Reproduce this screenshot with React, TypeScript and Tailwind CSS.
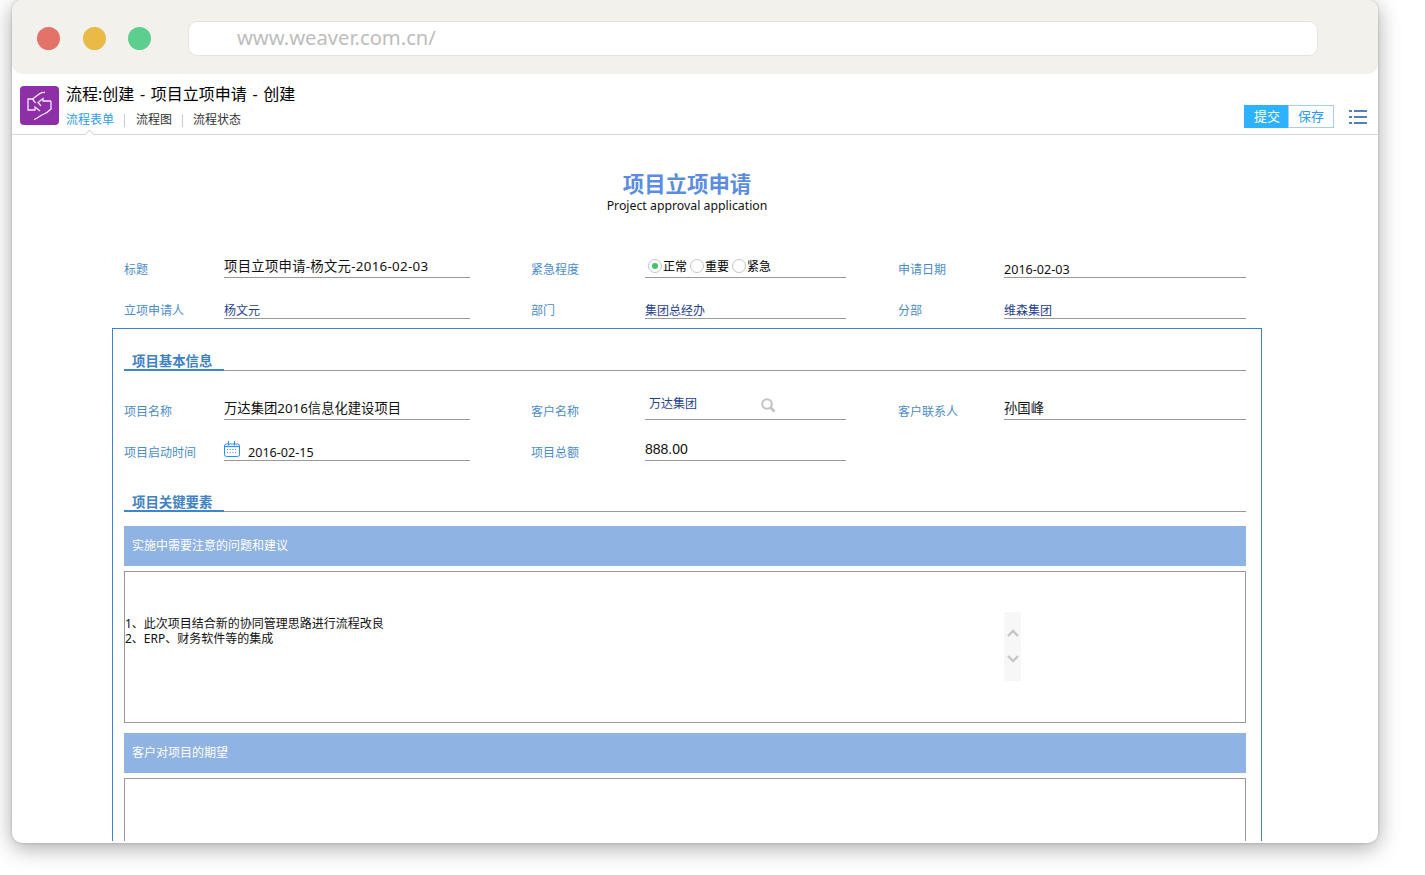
import type { ReactNode } from 'react'

const cjk = 'font-["Noto_Sans","Noto_Sans_CJK_SC",sans-serif]'

function Label({ children, className = '' }: { children: ReactNode; className?: string }) {
  return <div className={`self-end text-[12px] leading-4 text-[#4a8ccb] ${className}`}>{children}</div>
}

function Value({ children, className = '' }: { children: ReactNode; className?: string }) {
  return <div className={`relative h-[31px] border-b border-[#999] ${className}`}>{children}</div>
}

function Row({ children }: { children: ReactNode }) {
  return (
    <div className="grid grid-cols-[100px_246px_60px_115px_201px_52px_106px_242px] mb-[10px]">
      {children}
    </div>
  )
}

function Gap() {
  return <div />
}

function Radio({ on, label }: { on?: boolean; label: string }) {
  return (
    <span className="flex items-center">
      <span className="flex h-[14px] w-[14px] items-center justify-center rounded-full border border-[#c4c4c4] bg-white">
        {on && <span className="h-[6px] w-[6px] rounded-full bg-[#3cc46a]" />}
      </span>
      <span className="ml-px w-[27px] translate-y-px text-[12px] leading-4 text-black">{label}</span>
    </span>
  )
}

function SectionTitle({ title }: { title: string }) {
  return (
    <div className="relative h-[24px] border-b border-[#999]">
      <div className="h-[24px] w-[100px] border-b-2 border-[#3e86cc] pl-2 pt-[3px] text-[13.4px] font-bold leading-[22px] text-[#3e82c4]">
        {title}
      </div>
    </div>
  )
}

function Bar({ title }: { title: string }) {
  return (
    <div className="flex h-10 items-center bg-[#8fb3e3] pl-2 text-[12px] text-white">{title}</div>
  )
}

function Logo() {
  return (
    <div className="h-[39px] w-[39px] shrink-0 rounded-[4px] bg-[#8f2fa8]">
      <svg width="39" height="39" viewBox="0 0 39 39" fill="none" stroke="#f6ebf8" strokeWidth="1.3" strokeLinejoin="miter">
        <path d="M25 6.5 C21 6 19 8 12.5 13 L8 13 V24 H15 V21 L20 25" />
        <path d="M12.5 13 L15.5 17" />
        <path d="M31 15 H23 V12.5 L18 16.5 L21 20" />
        <path d="M31 15 V23 C28 26 26 27.5 23 28.5 C20 29.5 18 32 14 33.5" />
      </svg>
    </div>
  )
}

function Calendar() {
  return (
    <svg width="16" height="16" viewBox="0 0 16 16" fill="none" stroke="#2a8ff0" className="absolute left-0 top-[11px]">
      <rect x="0.5" y="3" width="15" height="12.5" rx="2" strokeWidth="1" />
      <path d="M0.5 5.5 H15.5" strokeWidth="1.2" />
      <path d="M4.5 0 V4.5 M10.5 0 V4.5" strokeWidth="1" />
      <path d="M3 8.5 H13 M3 11.5 H13" strokeWidth="1" strokeDasharray="1 1.7" />
    </svg>
  )
}

function SearchIcon() {
  return (
    <svg width="15" height="15" viewBox="0 0 15 15" fill="none" stroke="#c2c2c2" className="absolute left-[116px] top-[9px]">
      <circle cx="6" cy="6" r="4.8" strokeWidth="2" />
      <path d="M9.5 9.5 L13.5 13.5" strokeWidth="2.6" />
    </svg>
  )
}

function MenuIcon() {
  return (
    <svg width="18" height="14" viewBox="0 0 18 14" fill="#4f81bd" className="ml-[15px] mb-[4px]">
      <rect x="0" y="0" width="3" height="2" />
      <rect x="5" y="0" width="13" height="2" />
      <rect x="0" y="6" width="3" height="2" />
      <rect x="5" y="6" width="13" height="2" />
      <rect x="0" y="12" width="3" height="2" />
      <rect x="5" y="12" width="13" height="2" />
    </svg>
  )
}

export default function App() {
  return (
    <div className={`h-[875px] w-[1425px] overflow-hidden bg-white pl-3 ${cjk}`}>
      <div className="flex h-[843px] w-[1366px] flex-col overflow-hidden rounded-[10px] bg-white shadow-[0_5px_22px_rgba(0,0,0,0.34),0_0_3px_rgba(0,0,0,0.2)]">
        {/* browser bar */}
        <div className="flex h-[74px] shrink-0 items-center rounded-b-[10px] bg-[#f2f1ec] pl-[25px] pt-[3px]">
          <span className="h-[23px] w-[23px] rounded-full bg-[#e37268]" />
          <span className="ml-[23px] h-[23px] w-[23px] rounded-full bg-[#e9bb46]" />
          <span className="ml-[22px] h-[23px] w-[23px] rounded-full bg-[#5ccf8e]" />
          <div className="ml-[37px] flex h-[35px] w-[1130px] items-center rounded-[9px] border border-[#e4e3df] bg-white pl-[48px] pb-[2px] text-[20.2px] text-[#bdbdbd]">
            www.weaver.com.cn/
          </div>
        </div>

        {/* page header */}
        <div className="relative flex h-[61px] shrink-0 border-b border-[#d8d8d8] pl-2 pt-3">
          <Logo />
          <div className="ml-[7px]">
            <div className="-mt-px text-[16px] leading-[18px] text-black [word-spacing:1.5px]">流程:创建 - 项目立项申请 - 创建</div>
            <div className="mt-[9px] flex items-center text-[12px] leading-4 text-[#333]">
              <span className="text-[#2b9bf0]">流程表单</span>
              <span className="ml-[10px] mr-[11px] h-[13px] w-px bg-[#ccc]" />
              <span>流程图</span>
              <span className="ml-[10px] mr-[10px] h-[13px] w-px bg-[#ccc]" />
              <span>流程状态</span>
            </div>
          </div>
          <div className="ml-auto mr-[11px] flex items-end self-end pb-[6px]">
            <span className="flex h-[23px] w-[44px] items-center justify-center bg-[#2db2ff] pl-[2px] pt-px text-[13px] text-white">提交</span>
            <span className="flex h-[23px] w-[46px] items-center justify-center border border-[#aaccee] pt-px text-[13px] text-[#2b9bf0]">保存</span>
            <MenuIcon />
          </div>
          <span className="absolute bottom-[-4px] left-[74px] h-[7px] w-[7px] rotate-45 border-l border-t border-[#d8d8d8] bg-white" />
        </div>

        {/* form */}
        <div className="ml-[100px] min-h-0 w-[1150px] flex-1 mb-[2px]">
          <div className="h-[193px] px-3 pt-[35px]">
            <div className="-ml-3 -mr-3 text-center">
              <div className="text-[21.4px] font-bold leading-[28px] text-[#5a8de0]">项目立项申请</div>
              <div className="text-[12.3px] leading-[15px] text-[#111]">Project approval application</div>
            </div>
            <div className="mt-[34px]">
              <Row>
                <Label>标题</Label>
                <Value>
                  <span className="absolute left-0 top-[11px] text-[13.33px] leading-4 tracking-[0.3px] text-[#111]">项目立项申请-杨文元-2016-02-03</span>
                </Value>
                <Gap />
                <Label className="ml-px">紧急程度</Label>
                <Value>
                  <div className="absolute left-[3px] top-[11px] flex gap-0">
                    <Radio on label="正常" />
                    <Radio label="重要" />
                    <Radio label="紧急" />
                  </div>
                </Value>
                <Gap />
                <Label>申请日期</Label>
                <Value>
                  <span className="absolute -bottom-px left-0 text-[12.6px] leading-4 text-[#111]">2016-02-03</span>
                </Value>
              </Row>
              <Row>
                <Label>立项申请人</Label>
                <Value>
                  <span className="absolute -bottom-px left-0 text-[12px] leading-4 text-[#1f3f8f]">杨文元</span>
                </Value>
                <Gap />
                <Label className="ml-px">部门</Label>
                <Value>
                  <span className="absolute -bottom-px left-0 text-[12px] leading-4 text-[#1f3f8f]">集团总经办</span>
                </Value>
                <Gap />
                <Label>分部</Label>
                <Value>
                  <span className="absolute -bottom-px left-0 text-[12px] leading-4 text-[#1f3f8f]">维森集团</span>
                </Value>
              </Row>
            </div>
          </div>

          <div className="h-[513px] overflow-hidden border-x border-t border-[#3f7fd6] pl-[11px] pr-[15px] pt-[18px]">
            <SectionTitle title="项目基本信息" />
            <div className="mt-[18px]">
              <Row>
                <Label>项目名称</Label>
                <Value>
                  <span className="absolute left-0 top-[11px] text-[13.33px] leading-4 text-[#111]">万达集团2016信息化建设项目</span>
                </Value>
                <Gap />
                <Label className="ml-px">客户名称</Label>
                <Value>
                  <span className="absolute left-[4px] top-[7px] text-[12px] leading-4 text-[#1f3f8f]">万达集团</span>
                  <SearchIcon />
                </Value>
                <Gap />
                <Label>客户联系人</Label>
                <Value>
                  <span className="absolute left-0 top-[11px] text-[13.33px] leading-4 text-[#111]">孙国峰</span>
                </Value>
              </Row>
              <Row>
                <Label>项目启动时间</Label>
                <Value>
                  <Calendar />
                  <span className="absolute -bottom-px left-[24px] text-[12.6px] leading-4 text-[#111]">2016-02-15</span>
                </Value>
                <Gap />
                <Label className="ml-px">项目总额</Label>
                <Value>
                  <span className="absolute left-0 top-[11px] text-[14px] leading-4 font-['Liberation_Sans',sans-serif] text-[#111]">888.00</span>
                </Value>
              </Row>
            </div>
            <div className="mt-[27px]">
              <SectionTitle title="项目关键要素" />
            </div>
            <div className="mt-[14px]">
              <Bar title="实施中需要注意的问题和建议" />
            </div>
            <div className="relative mt-[5px] h-[152px] border border-[#999] pt-[44px] text-[12px] leading-[15px] text-[#111]">
              <div>1、此次项目结合新的协同管理思路进行流程改良</div>
              <div>2、ERP、财务软件等的集成</div>
              <div className="absolute left-[879px] top-[40px] flex h-[69px] w-[17px] flex-col items-center bg-[#f7f7f7] pt-[17px]">
                <svg width="12" height="8" viewBox="0 0 12 8" fill="none" stroke="#c6c6c6" strokeWidth="2.4">
                  <path d="M1 7 L6 2 L11 7" />
                </svg>
                <svg width="12" height="8" viewBox="0 0 12 8" fill="none" stroke="#c6c6c6" strokeWidth="2.4" className="mt-[18px]">
                  <path d="M1 1 L6 6 L11 1" />
                </svg>
              </div>
            </div>
            <div className="mt-[10px]">
              <Bar title="客户对项目的期望" />
            </div>
            <div className="mt-[5px] h-[100px] border border-[#999]" />
          </div>
        </div>
      </div>
    </div>
  )
}
